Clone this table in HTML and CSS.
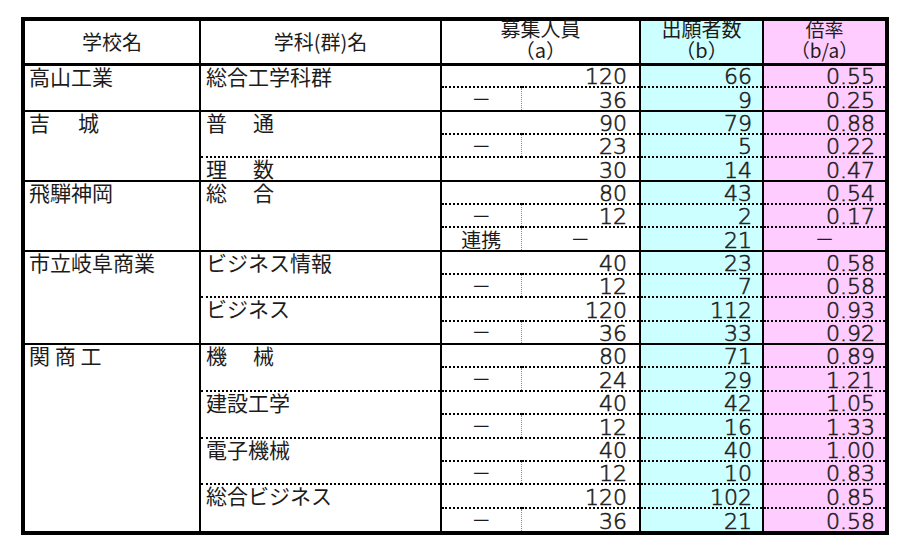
FILE: index.html
```html
<!DOCTYPE html>
<html lang="ja">
<head>
<meta charset="utf-8">
<title>出願状況</title>
<link rel="stylesheet" href="styles.css">
</head>
<body>
<div class="frame">
<table class="tbl">
<colgroup>
<col class="w-school"><col class="w-subj"><col class="w-a1"><col class="w-a2"><col class="w-b"><col class="w-r">
</colgroup>
<thead>
<tr class="head">
<th class="h-school">学校名</th>
<th class="h-subj">学科(群)名</th>
<th class="h-a" colspan="2"><div class="h2">募集人員<br>（a）</div></th>
<th class="h-b"><div class="h2">出願者数<br>（b）</div></th>
<th class="h-r"><div class="h2 small">倍率<br>（b/a）</div></th>
</tr>
</thead>
<tbody>
<!-- 高山工業 -->
<tr class="grp">
<td class="school" rowspan="2">高山工業</td>
<td class="subj" rowspan="2">総合工学科群</td>
<td class="a" colspan="2">120</td><td class="b">66</td><td class="r">0.55</td>
</tr>
<tr><td class="dash">－</td><td class="a">36</td><td class="b">9</td><td class="r">0.25</td></tr>
<!-- 吉城 -->
<tr class="grp">
<td class="school" rowspan="3"><span class="ls-a">吉　城</span></td>
<td class="subj" rowspan="2"><span class="ls-b">普　通</span></td>
<td class="a" colspan="2">90</td><td class="b">79</td><td class="r">0.88</td>
</tr>
<tr><td class="dash">－</td><td class="a">23</td><td class="b">5</td><td class="r">0.22</td></tr>
<tr><td class="subj"><span class="ls-b">理　数</span></td><td class="a" colspan="2">30</td><td class="b">14</td><td class="r">0.47</td></tr>
<!-- 飛騨神岡 -->
<tr class="grp">
<td class="school" rowspan="3">飛騨神岡</td>
<td class="subj" rowspan="3"><span class="ls-b">総　合</span></td>
<td class="a" colspan="2">80</td><td class="b">43</td><td class="r">0.54</td>
</tr>
<tr><td class="dash">－</td><td class="a">12</td><td class="b">2</td><td class="r">0.17</td></tr>
<tr><td class="label">連携</td><td class="a center">－</td><td class="b">21</td><td class="r center">－</td></tr>
<!-- 市立岐阜商業 -->
<tr class="grp">
<td class="school" rowspan="4">市立岐阜商業</td>
<td class="subj" rowspan="2">ビジネス情報</td>
<td class="a" colspan="2">40</td><td class="b">23</td><td class="r">0.58</td>
</tr>
<tr><td class="dash">－</td><td class="a">12</td><td class="b">7</td><td class="r">0.58</td></tr>
<tr><td class="subj" rowspan="2">ビジネス</td><td class="a" colspan="2">120</td><td class="b">112</td><td class="r">0.93</td></tr>
<tr><td class="dash">－</td><td class="a">36</td><td class="b">33</td><td class="r">0.92</td></tr>
<!-- 関商工 -->
<tr class="grp">
<td class="school" rowspan="8">関 商 工</td>
<td class="subj" rowspan="2"><span class="ls-b">機　械</span></td>
<td class="a" colspan="2">80</td><td class="b">71</td><td class="r">0.89</td>
</tr>
<tr><td class="dash">－</td><td class="a">24</td><td class="b">29</td><td class="r">1.21</td></tr>
<tr><td class="subj" rowspan="2">建設工学</td><td class="a" colspan="2">40</td><td class="b">42</td><td class="r">1.05</td></tr>
<tr><td class="dash">－</td><td class="a">12</td><td class="b">16</td><td class="r">1.33</td></tr>
<tr><td class="subj" rowspan="2">電子機械</td><td class="a" colspan="2">40</td><td class="b">40</td><td class="r">1.00</td></tr>
<tr><td class="dash">－</td><td class="a">12</td><td class="b">10</td><td class="r">0.83</td></tr>
<tr><td class="subj" rowspan="2">総合ビジネス</td><td class="a" colspan="2">120</td><td class="b">102</td><td class="r">0.85</td></tr>
<tr><td class="dash">－</td><td class="a">36</td><td class="b">21</td><td class="r">0.58</td></tr>
</tbody>
</table>
</div>
</body>
</html>
```

FILE: styles.css
```css
* { box-sizing: border-box; }

body {
  margin: 0;
  background: #ffffff;
  font-family: "Noto Sans CJK JP", "Noto Sans", sans-serif;
  color: #1c1c1c;
}

td, th { padding: 0; }

.frame {
  margin: 17px 0 0 21px;
  width: 868px;
  border: 4px solid #000;
}

.tbl {
  width: 860px;
  border-collapse: collapse;
  table-layout: fixed;
}

.w-school { width: 175px; }
.w-subj { width: 241px; }
.w-a1 { width: 80px; }
.w-a2 { width: 119px; }
.w-b { width: 123px; }
.w-r { width: 122px; }

/* header */
.head { height: 43px; }

.head th {
  font-weight: normal;
  font-size: 20px;
  line-height: 22px;
  text-align: center;
  vertical-align: middle;
  border-bottom: 3px solid #000;
}

.h-school, .h-subj, .h-a, .h-b { border-right: 2px solid #000; }

.h-b { background: #ccffff; }
.h-r { background: #ffccff; }

.h2 {
  margin-top: -5px;
  line-height: 21px;
}
.h2.small { font-size: 19px; }

/* body rows */
.tbl tbody tr { height: 23.35px; }

.school,
.subj {
  font-size: 21px;
  line-height: 21px;
  vertical-align: top;
  text-align: left;
  white-space: nowrap;
  border-right: 2px solid #000;
}
.school { padding-left: 4px; }
.subj { padding-left: 5px; border-top: 2px dotted #000; }

.ls-a { letter-spacing: 3.5px; }
.ls-b { letter-spacing: 2.5px; }

.a, .b, .r {
  font-family: "DejaVu Sans", "Noto Sans", sans-serif;
  font-weight: 200;
  font-size: 22px;
  line-height: 18px;
  color: #1e1e1e;
  -webkit-text-stroke: 0.6px #1e1e1e;
  text-align: right;
  vertical-align: bottom;
  border-top: 2px dotted #000;
}

.a { padding-right: 12px; border-right: 2px solid #000; }
.b { padding-right: 10px; border-right: 2px solid #000; background: #ccffff; }
.r { padding-right: 10px; background: #ffccff; }

.dash,
.label {
  font-size: 20px;
  text-align: center;
  border-top: 2px dotted #000;
  border-right: 1px dotted #8a8a8a;
}
.dash {
  line-height: 20px;
  vertical-align: middle;
}
.label {
  line-height: 20px;
  vertical-align: bottom;
}

.a.center,
.r.center {
  font-family: "Noto Sans CJK JP", sans-serif;
  font-weight: normal;
  -webkit-text-stroke: 0;
  font-size: 20px;
  line-height: 20px;
  text-align: center;
  vertical-align: middle;
  padding-right: 0;
}

/* group separators */
.tbl .grp > td { border-top: 2px solid #000; }
```
